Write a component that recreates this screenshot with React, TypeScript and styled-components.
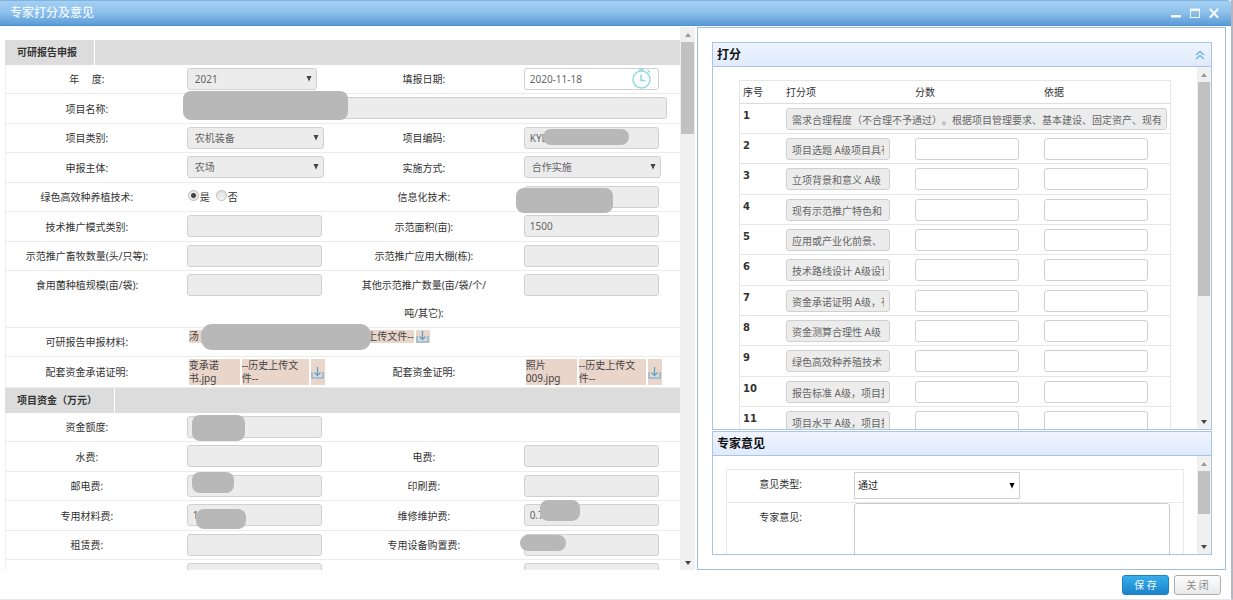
import React, { useId } from "react";
import styled, { createGlobalStyle } from "styled-components";

const GlobalStyle = createGlobalStyle`
  *, *::before, *::after { box-sizing: border-box; }
  body {
    margin: 0;
    background: #fff;
    color: #333;
    font: 10px/13px "Noto Sans", "Noto Sans CJK SC", sans-serif;
    text-spacing-trim: space-all;
  }
  input, select, textarea, button { font: inherit; margin: 0; }
`;

/* ---------- window frame ---------- */

const Dialog = styled.div`
  display: flex;
  flex-direction: column;
  height: 100vh;
  background: #fff;
  border-bottom: 1px solid #e6e6e6;
  border-right: 2px solid #b3b8c4;
`;

const TitleBar = styled.header`
  display: flex;
  align-items: center;
  justify-content: space-between;
  flex: none;
  height: 26px;
  padding: 0 12px 0 10px;
  border-top: 1px solid #7fb4df;
  border-bottom: 1px solid #4f8fcf;
  border-radius: 0 4px 0 0;
  background: linear-gradient(#a4d0f3, #8fc2ec 45%, #5b9bd8);
`;

const Title = styled.h1`
  margin: 0;
  font-size: 12px;
  line-height: 24px;
  font-weight: 500;
  color: #eef7ff;
`;

const WindowControls = styled.div`
  display: flex;
  gap: 9px;
`;

const ControlButton = styled.button`
  display: flex;
  width: 10px;
  height: 12px;
  padding: 0;
  border: 0;
  background: none;
  color: #f3faff;
`;

const Panes = styled.main`
  display: grid;
  flex: 1;
  min-height: 0;
  grid-template-columns: minmax(0, 697fr) minmax(0, 529fr);
  grid-template-rows: minmax(0, 1fr);
  padding: 1px 5px 0 0;
`;

const Footer = styled.footer`
  display: flex;
  flex: none;
  justify-content: flex-end;
  align-items: center;
  gap: 5px;
  height: 29px;
  padding-right: 10px;
`;

const FooterButton = styled.button<{ $primary?: boolean }>`
  width: 47px;
  height: 20px;
  padding: 0;
  line-height: 16px;
  border-radius: 3px;
  border: 1px solid ${(p) => (p.$primary ? "#1f83c2" : "#adadad")};
  background: ${(p) =>
    p.$primary ? "linear-gradient(#37aee9, #1b82cb)" : "linear-gradient(#fdfdfd, #e9e9e9)"};
  color: ${(p) => (p.$primary ? "#f2faff" : "#888")};
`;

/* ---------- scroll bar ---------- */

const Track = styled.div<{ $width: number }>`
  display: flex;
  flex: none;
  flex-direction: column;
  width: ${(p) => p.$width}px;
  background: #f0f0f0;
`;

const TrackEnd = styled.div<{ $bottom?: boolean }>`
  display: flex;
  flex: none;
  align-items: center;
  justify-content: center;
  height: 15px;
  margin-top: ${(p) => (p.$bottom ? "auto" : "0")};
  color: ${(p) => (p.$bottom ? "#444" : "#999")};
`;

const Thumb = styled.div`
  flex: none;
  margin: 0 1px;
  background: #c1c1c1;
`;

function ScrollBar({ thumb, width = 14 }: { thumb: string; width?: number }) {
  return (
    <Track $width={width} aria-hidden="true">
      <TrackEnd>
        <svg width="6" height="4" viewBox="0 0 6 4"><path d="M0 4 3 0 6 4z" fill="currentColor" /></svg>
      </TrackEnd>
      <Thumb style={{ height: thumb }} />
      <TrackEnd $bottom>
        <svg width="6" height="4" viewBox="0 0 6 4"><path d="M0 0 3 4 6 0z" fill="currentColor" /></svg>
      </TrackEnd>
    </Track>
  );
}

/* ---------- application form ---------- */

const FormPane = styled.div`
  display: flex;
  min-width: 0;
  padding: 0 2px 0 5px;
`;

const FormScroll = styled.form`
  flex: 1;
  min-width: 0;
  overflow: hidden;
  padding-top: 13px;
`;

const SectionHead = styled.div`
  height: 25px;
  background: #dcdcdc;
`;

const SectionTitle = styled.h2`
  display: inline-block;
  margin: 0;
  padding: 0 17px 0 12px;
  border-right: 1px solid #fff;
  font-size: 10px;
  line-height: 25px;
  font-weight: 700;
`;

const RowGroup = styled.div`
  border-left: 1px solid #eee;
`;

const Row = styled.div<{ $height?: number }>`
  display: grid;
  grid-template-columns: 24% 26% 24% 26%;
  min-height: ${(p) => p.$height ?? 29}px;
  border-bottom: 1px solid #ececec;
  &:nth-child(even) { min-height: ${(p) => p.$height ?? 30}px; }
`;

const Label = styled.label`
  align-self: center;
  padding: 0 15px;
  line-height: 28px;
  text-align: center;
  white-space: pre-wrap;
`;

const TopLabel = styled(Label)`
  align-self: start;
`;

const Value = styled.div<{ $wide?: boolean }>`
  display: flex;
  align-items: flex-start;
  padding: 3px 13px 0 19px;
  grid-column: ${(p) => (p.$wide ? "span 3" : "auto")};
`;

const Field = styled.div<{ $width?: number }>`
  position: relative;
  width: ${(p) => (p.$width ? `${p.$width}px` : "100%")};
`;

const TextInput = styled.input<{ $editable?: boolean }>`
  display: block;
  width: 100%;
  height: 22px;
  padding: 0 5px;
  border: 1px solid #d0d0d0;
  border-radius: 3px;
  outline: 0;
  background: ${(p) => (p.$editable ? "#fff" : "#ececec")};
  color: #666;
`;

const Select = styled.select<{ $plain?: boolean }>`
  display: block;
  appearance: none;
  width: 100%;
  height: ${(p) => (p.$plain ? 27 : 22)}px;
  padding: 0 ${(p) => (p.$plain ? 3 : 7)}px;
  border: 1px solid #d0d0d0;
  border-radius: ${(p) => (p.$plain ? 0 : 3)}px;
  background: ${(p) => (p.$plain ? "#fff" : "#ececec")};
  color: ${(p) => (p.$plain ? "#222" : "#666")};
`;

const SelectArrow = styled.svg`
  position: absolute;
  top: calc(50% - 3px);
  right: 5px;
  pointer-events: none;
`;

const ClockIcon = styled.svg`
  position: absolute;
  top: 0;
  right: 7px;
`;

const Cover = styled.div<{ $x: number; $y: number; $w: number; $h: number; $r?: number }>`
  position: absolute;
  left: ${(p) => p.$x}px;
  top: ${(p) => p.$y}px;
  width: ${(p) => p.$w}px;
  height: ${(p) => p.$h}px;
  border-radius: ${(p) => p.$r ?? 8}px;
  background: #b8b8b8;
  z-index: 1;
`;

type CoverBox = [x: number, y: number, w: number, h: number, r?: number];

interface CellProps {
  label: string;
  value?: string;
  width?: number;
  kind?: "text" | "select" | "date";
  wide?: boolean;
  top?: boolean;
  cover?: CoverBox;
}

function Arrow({ color }: { color: string }) {
  return (
    <SelectArrow width="6" height="6" viewBox="0 0 6 6" aria-hidden="true">
      <path d="M.5 0h5L3 5.5z" fill={color} />
    </SelectArrow>
  );
}

function Cell({ label, value = "", width = 135, kind = "text", wide, top, cover }: CellProps) {
  const id = useId();
  const LabelTag = top ? TopLabel : Label;
  return (
    <>
      <LabelTag htmlFor={id}>{label}</LabelTag>
      <Value $wide={wide}>
        <Field $width={wide ? undefined : width}>
          {kind === "select" ? (
            <>
              <Select id={id} defaultValue={value}><option>{value}</option></Select>
              <Arrow color="#444" />
            </>
          ) : (
            <TextInput id={id} readOnly defaultValue={value} $editable={kind === "date"} />
          )}
          {kind === "date" && (
            <ClockIcon width="21" height="21" viewBox="0 0 21 21" fill="none" stroke="#8fdcdc" strokeWidth="1.5" aria-hidden="true">
              <circle cx="10.5" cy="11.5" r="8.5" />
              <path d="M10 6.5v6h4.5" />
              <path d="M8 1.5h5M16.5 2l2.5 2.5" />
            </ClockIcon>
          )}
          {cover && <Cover $x={cover[0]} $y={cover[1]} $w={cover[2]} $h={cover[3]} $r={cover[4]} />}
        </Field>
      </Value>
    </>
  );
}

const RadioGroup = styled.div`
  display: flex;
  gap: 6px;
  padding: 3px 0 0 20px;
`;

const RadioLabel = styled.label`
  display: flex;
  gap: 1px;
  line-height: 22px;
`;

const Radio = styled.input`
  appearance: none;
  width: 11px;
  height: 11px;
  margin-top: 4px;
  border: 1px solid #bbb;
  border-radius: 50%;
  background: linear-gradient(#ddd, #f6f6f6);
  &:checked { background: radial-gradient(circle, #444 0 2px, #e8e8e8 3px); }
`;

const Files = styled.div<{ $wide?: boolean }>`
  position: relative;
  display: flex;
  align-self: start;
  gap: 2px;
  padding: 2px 0 0 21px;
  grid-column: ${(p) => (p.$wide ? "span 3" : "auto")};
`;

const FileText = styled.a<{ $width: number; $end?: boolean }>`
  width: ${(p) => p.$width}px;
  background: #ead5ca;
  color: #444;
  line-height: 13px;
  text-decoration: none;
  text-align: ${(p) => (p.$end ? "right" : "left")};
`;

const FileIcon = styled.a`
  display: flex;
  align-items: center;
  justify-content: center;
  width: 14px;
  background: #ead5ca;
`;

function Download() {
  return (
    <FileIcon href="#" aria-label="下载">
      <svg width="13" height="13" viewBox="0 0 13 13" fill="none">
        <path d="M1 6v6h11V6" stroke="#8cbbd6" strokeWidth="1.6" />
        <path d="M6.5 1v8M3.5 6.5l3 3 3-3" stroke="#5ea3cc" strokeWidth="1.3" />
      </svg>
    </FileIcon>
  );
}

/* ---------- score and opinion panels ---------- */

const SidePane = styled.div`
  display: flex;
  flex-direction: column;
  gap: 1px;
  min-width: 0;
  padding: 14px 13px 14px 14px;
  border: 1px solid #9dbfdc;
`;

const Panel = styled.section<{ $grow?: boolean }>`
  display: flex;
  flex-direction: column;
  flex: ${(p) => (p.$grow ? "1" : "0 0 124px")};
  min-height: 0;
  border: 1px solid #a9c5e4;
`;

const PanelHead = styled.div`
  display: flex;
  flex: none;
  align-items: center;
  justify-content: space-between;
  height: 24px;
  padding: 0 6px 0 4px;
  border-bottom: 1px solid #a9c5e4;
  background: linear-gradient(#eff4fe, #dfeafc);
`;

const PanelTitle = styled.h2`
  margin: 0;
  font-size: 12px;
  line-height: 23px;
  font-weight: 700;
  color: #111;
`;

const CollapseButton = styled.button`
  display: flex;
  padding: 0;
  border: 0;
  background: none;
  color: #74b4e4;
`;

const PanelBody = styled.div`
  display: flex;
  flex: 1;
  min-height: 0;
`;

const PanelScroll = styled.div<{ $pad: string }>`
  flex: 1;
  min-width: 0;
  overflow: hidden;
  padding: ${(p) => p.$pad};
`;

const ScoreTable = styled.table`
  width: 100%;
  table-layout: fixed;
  border-collapse: separate;
  border-spacing: 0;
  border: 1px solid #e6e6e6;
`;

const ScoreHead = styled.th<{ $share?: number }>`
  width: ${(p) => p.$share}%;
  height: 23px;
  padding: 0 3px;
  border-bottom: 1px solid #ddd;
  font-weight: 400;
  text-align: left;
`;

const ScoreRow = styled.tr`
  height: 30px;
  &:nth-child(3n) { height: 31px; }
`;

const ScoreIndex = styled.th`
  padding: 4px 3px 0;
  border-bottom: 1px solid #e6e6e6;
  font-family: "DejaVu Sans", sans-serif;
  font-size: 10px;
  line-height: 15px;
  font-weight: 700;
  text-align: left;
  vertical-align: top;
`;

const ScoreCell = styled.td<{ $full?: boolean }>`
  padding: 4px ${(p) => (p.$full ? 3 : 22)}px 2px 3px;
  border-bottom: 1px solid #e6e6e6;
  vertical-align: top;
`;

const OpinionForm = styled.form`
  border: 1px solid #e8e8e8;
`;

const OpinionRow = styled.div`
  display: grid;
  grid-template-columns: 127px 1fr;
  padding-right: 13px;
  border-bottom: 1px solid #e8e8e8;
`;

const OpinionLabel = styled.label`
  padding-right: 20px;
  text-align: center;
  line-height: 28px;
`;

const OpinionField = styled.div`
  position: relative;
  width: 166px;
  margin: 2px 0 3px;
`;

const OpinionText = styled.textarea`
  display: block;
  width: 100%;
  height: 110px;
  border: 1px solid #ccc;
  border-radius: 3px;
  resize: none;
`;

const criteria = [
  "需求合理程度（不合理不予通过）。根据项目管理要求、基本建设、固定资产、现有条件",
  "项目选题 A级项目具有",
  "立项背景和意义 A级",
  "现有示范推广特色和",
  "应用或产业化前景、",
  "技术路线设计 A级设计",
  "资金承诺证明 A级，有",
  "资金测算合理性 A级",
  "绿色高效种养殖技术",
  "报告标准 A级，项目报",
  "项目水平 A级，项目技",
];

export default function App() {
  return (
    <>
      <GlobalStyle />
      <Dialog>
        <TitleBar>
          <Title>专家打分及意见</Title>
          <WindowControls>
            <ControlButton aria-label="最小化">
              <svg width="10" height="12" viewBox="0 0 10 12"><path d="M0 8h10v2.5H0z" fill="currentColor" /></svg>
            </ControlButton>
            <ControlButton aria-label="最大化">
              <svg width="10" height="12" viewBox="0 0 10 12"><path d="M0 1.5h10v9.5H0zM1 4v6h8V4z" fill="currentColor" fillRule="evenodd" /></svg>
            </ControlButton>
            <ControlButton aria-label="关闭窗口">
              <svg width="10" height="12" viewBox="0 0 10 12"><path d="M.8 1.8l8.4 8.9M9.2 1.8L.8 10.7" stroke="currentColor" strokeWidth="2" /></svg>
            </ControlButton>
          </WindowControls>
        </TitleBar>

        <Panes>
          <FormPane>
            <FormScroll>
              <SectionHead><SectionTitle>可研报告申报</SectionTitle></SectionHead>
              <RowGroup>
                <Row>
                  <Cell label={"年\u3000 度:"} kind="select" value="2021" width={130} />
                  <Cell label="填报日期:" kind="date" value="2020-11-18" />
                </Row>
                <Row>
                  <Cell label="项目名称:" wide cover={[-4, -6, 165, 29]} />
                </Row>
                <Row>
                  <Cell label="项目类别:" kind="select" value="农机装备" width={137} />
                  <Cell label="项目编码:" value="KYL" cover={[19, 2, 86, 16]} />
                </Row>
                <Row>
                  <Cell label="申报主体:" kind="select" value="农场" width={137} />
                  <Cell label="实施方式:" kind="select" value="合作实施" width={137} />
                </Row>
                <Row>
                  <Label as="div" id="green-tech">绿色高效种养植技术:</Label>
                  <RadioGroup role="radiogroup" aria-labelledby="green-tech">
                    <RadioLabel><Radio type="radio" name="green" defaultChecked />是</RadioLabel>
                    <RadioLabel><Radio type="radio" name="green" />否</RadioLabel>
                  </RadioGroup>
                  <Cell label="信息化技术:" cover={[-8, 2, 97, 25]} />
                </Row>
                <Row>
                  <Cell label="技术推广模式类别:" />
                  <Cell label="示范面积(亩):" value="1500" />
                </Row>
                <Row>
                  <Cell label="示范推广畜牧数量(头/只等):" />
                  <Cell label="示范推广应用大棚(栋):" />
                </Row>
                <Row $height={56}>
                  <Cell top label="食用菌种植规模(亩/袋):" />
                  <Cell top label="其他示范推广数量(亩/袋/个/吨/其它):" />
                </Row>
                <Row>
                  <Label as="div">可研报告申报材料:</Label>
                  <Files $wide>
                    <FileText href="#" $width={51}>汤</FileText>
                    <FileText href="#" $width={172} $end>--历史上传文件--</FileText>
                    <Download />
                    <Cover $x={33} $y={-4} $w={170} $h={26} $r={11} />
                  </Files>
                </Row>
                <Row $height={31}>
                  <Label as="div">配套资金承诺证明:</Label>
                  <Files>
                    <FileText href="#" $width={51}>变承诺书.jpg</FileText>
                    <FileText href="#" $width={67}>--历史上传文件--</FileText>
                    <Download />
                  </Files>
                  <Label as="div">配套资金证明:</Label>
                  <Files>
                    <FileText href="#" $width={51}>照片 009.jpg</FileText>
                    <FileText href="#" $width={67}>--历史上传文件--</FileText>
                    <Download />
                  </Files>
                </Row>
              </RowGroup>
              <SectionHead><SectionTitle>项目资金（万元）</SectionTitle></SectionHead>
              <RowGroup>
                <Row>
                  <Cell label="资金额度:" value="4" cover={[5, -1, 53, 26]} />
                </Row>
                <Row>
                  <Cell label="水费:" />
                  <Cell label="电费:" />
                </Row>
                <Row>
                  <Cell label="邮电费:" value="0" cover={[5, -3, 42, 21]} />
                  <Cell label="印刷费:" />
                </Row>
                <Row>
                  <Cell label="专用材料费:" value="10" cover={[9, 5, 50, 20]} />
                  <Cell label="维修维护费:" value="0.7" cover={[16, -4, 40, 21]} />
                </Row>
                <Row>
                  <Cell label="租赁费:" />
                  <Cell label="专用设备购置费:" cover={[-4, 1, 46, 16]} />
                </Row>
                <Row>
                  <Cell label="差旅费:" />
                  <Cell label="劳务费:" />
                </Row>
              </RowGroup>
            </FormScroll>
            <ScrollBar thumb="17%" width={15} />
          </FormPane>

          <SidePane>
            <Panel $grow>
              <PanelHead>
                <PanelTitle>打分</PanelTitle>
                <CollapseButton aria-label="收起">
                  <svg width="10" height="10" viewBox="0 0 10 10" fill="none" stroke="currentColor" strokeWidth="1.5">
                    <path d="M1 5l4-3.5L9 5M1 9l4-3.5L9 9" />
                  </svg>
                </CollapseButton>
              </PanelHead>
              <PanelBody>
                <PanelScroll $pad="13px 26px 0">
                  <ScoreTable>
                    <thead>
                      <tr>
                        <ScoreHead $share={10}>序号</ScoreHead>
                        <ScoreHead $share={30}>打分项</ScoreHead>
                        <ScoreHead $share={30}>分数</ScoreHead>
                        <ScoreHead $share={30}>依据</ScoreHead>
                      </tr>
                    </thead>
                    <tbody>
                      {criteria.map((text, i) => (
                        <ScoreRow key={text}>
                          <ScoreIndex scope="row">{i + 1}</ScoreIndex>
                          <ScoreCell colSpan={i === 0 ? 3 : 1} $full={i === 0}>
                            <TextInput readOnly defaultValue={text} aria-label={`打分项 ${i + 1}`} />
                          </ScoreCell>
                          {i > 0 && (
                            <>
                              <ScoreCell><TextInput $editable aria-label={`分数 ${i + 1}`} /></ScoreCell>
                              <ScoreCell><TextInput $editable aria-label={`依据 ${i + 1}`} /></ScoreCell>
                            </>
                          )}
                        </ScoreRow>
                      ))}
                    </tbody>
                  </ScoreTable>
                </PanelScroll>
                <ScrollBar thumb="59%" />
              </PanelBody>
            </Panel>

            <Panel>
              <PanelHead><PanelTitle>专家意见</PanelTitle></PanelHead>
              <PanelBody>
                <PanelScroll $pad="13px 13px 0">
                  <OpinionForm>
                    <OpinionRow>
                      <OpinionLabel htmlFor="opinion-type">意见类型:</OpinionLabel>
                      <OpinionField>
                        <Select $plain id="opinion-type" defaultValue="通过"><option>通过</option></Select>
                        <Arrow color="#000" />
                      </OpinionField>
                    </OpinionRow>
                    <OpinionRow>
                      <OpinionLabel htmlFor="opinion-text">专家意见:</OpinionLabel>
                      <OpinionText id="opinion-text" />
                    </OpinionRow>
                  </OpinionForm>
                </PanelScroll>
                <ScrollBar thumb="44%" />
              </PanelBody>
            </Panel>
          </SidePane>
        </Panes>

        <Footer>
          <FooterButton $primary>保 存</FooterButton>
          <FooterButton>关 闭</FooterButton>
        </Footer>
      </Dialog>
    </>
  );
}
